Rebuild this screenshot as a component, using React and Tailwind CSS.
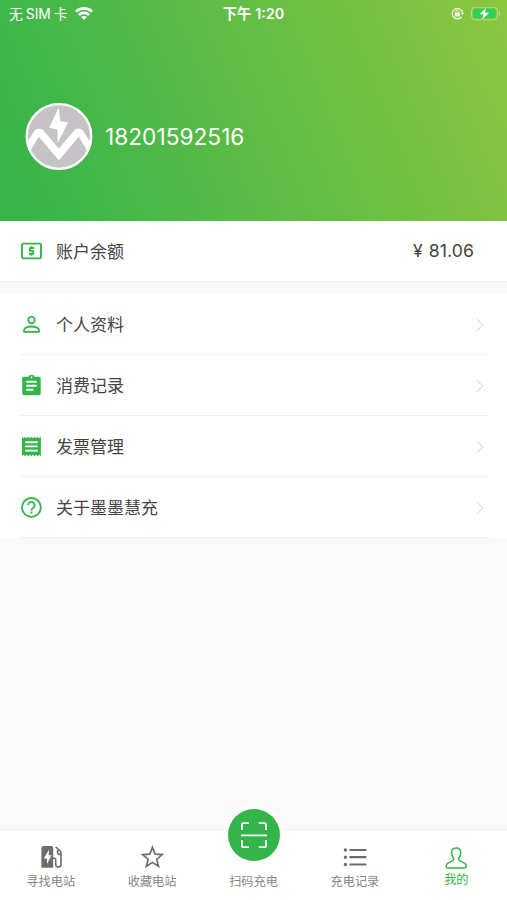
import React from 'react';

const GREEN = '#33b54a';

function WifiIcon() {
  return (
    <svg className="h-[14px] w-[18px]" viewBox="0 0 18 14" fill="none" stroke="#fff" strokeWidth="2.7">
      <path d="M0.9 4.6C5.4 0.2 12.6 0.2 17.1 4.6" />
      <path d="M3.9 7.9C6.8 5.2 11.2 5.2 14.1 7.9" />
      <path d="M6.1 10.1C7.7 8.7 10.3 8.7 11.9 10.1L9 13.1Z" fill="#fff" stroke="none" />
    </svg>
  );
}

function LockIcon() {
  return (
    <svg className="h-[13px] w-[13px]" viewBox="0 0 13 13" fill="none" stroke="#effae6">
      <path d="M10.6 9.8A5.2 5.2 0 1 1 11.5 5.6" strokeWidth="1.3" />
      <path d="M9.8 5.8h3.2l-1.5 2.4z" fill="#effae6" stroke="none" />
      <rect x="3.8" y="5.6" width="5" height="3.9" rx="0.5" fill="#effae6" stroke="none" />
      <path d="M4.8 6V4.7a1.5 1.5 0 0 1 3 0V6" strokeWidth="1" />
    </svg>
  );
}

function BatteryIcon() {
  return (
    <svg className="h-[14px] w-[30px]" viewBox="0 0 30 14">
      <rect x="0.6" y="0.2" width="25.8" height="12.6" rx="3.8" fill="none" stroke="#b5dc86" strokeWidth="1" />
      <path d="M27.9 4.2c1.6.7 1.6 4 0 4.7z" fill="#b5dc86" />
      <rect x="2.2" y="1.7" width="22.6" height="9.6" rx="2.3" fill="#30d158" />
      <path d="M15 1L8.6 7.3h3.9L11.4 12.2L18.2 5.7h-4.2z" fill="#fff" />
    </svg>
  );
}

function Avatar() {
  return (
    <svg className="h-[68px] w-[68px]" viewBox="0 0 68 68">
      <defs>
        <clipPath id="avatar-disc">
          <circle cx="34" cy="33.5" r="33" />
        </clipPath>
      </defs>
      <circle cx="34" cy="33.5" r="32.3" fill="#c5c3c5" />
      <g clipPath="url(#avatar-disc)">
        <path
          d="M0 42.5L9.8 27.2Q10.8 25.7 12.5 25.7H15.3Q17 25.7 18 27L33.8 45.4L49.6 27Q50.6 25.7 52.3 25.7H55Q56.7 25.7 57.6 27.2L68 43L64 51L53.8 33.8L33.8 57.2L13.7 33.8L3.5 51Z"
          fill="#fff"
        />
        <path d="M33.6 4.8L24.2 24.8L32.5 26.4V40.6L43.2 19.2L35.4 18.2Z" fill="#fff" />
      </g>
      <circle cx="34" cy="33.5" r="32.3" fill="none" stroke="#fff" strokeWidth="2.3" />
    </svg>
  );
}

function MoneyIcon() {
  return (
    <svg className="h-[22px] w-[22px]" viewBox="0 0 22 22" fill="none" stroke={GREEN}>
      <rect x="2" y="3.6" width="19" height="14.8" rx="1.2" strokeWidth="1.9" />
      <path d="M14.2 8H10.2Q9.8 8 9.8 8.4V10.5Q9.8 10.9 10.2 10.9H12.8Q13.2 10.9 13.2 11.3V13.4Q13.2 13.8 12.8 13.8H8.8M11.5 6.2V8M11.5 13.8V15.7" strokeWidth="1.9" />
    </svg>
  );
}

function PersonIcon() {
  return (
    <svg className="h-[22px] w-[22px]" viewBox="0 0 22 22" fill="none" stroke={GREEN} strokeWidth="1.8">
      <circle cx="11.5" cy="6.1" r="3.3" />
      <path d="M4 17.8V16.2C4 13.7 8.3 12.5 11.5 12.5S19 13.7 19 16.2V17.8Z" strokeLinejoin="round" />
    </svg>
  );
}

function ClipboardIcon() {
  return (
    <svg className="h-[22px] w-[22px]" viewBox="0 0 22 22">
      <path
        d="M4 1.7H8.6a3 3 0 0 1 5.8 0H18.9a1.8 1.8 0 0 1 1.8 1.8V18.5a1.8 1.8 0 0 1-1.8 1.8H4A1.8 1.8 0 0 1 2.2 18.5V3.5A1.8 1.8 0 0 1 4 1.7Z"
        fill={GREEN}
      />
      <circle cx="11.5" cy="2.3" r="0.9" fill="#fff" />
      <path d="M6.2 6.8H16.7M6.2 10.8H16.7M6.2 14.8H13.4" stroke="#fff" strokeWidth="1.9" />
    </svg>
  );
}

function ReceiptIcon() {
  return (
    <svg className="h-[22px] w-[22px]" viewBox="0 0 22 22">
      <path
        d="M2 0.8L3.6 2.2L5.1 0.8L6.7 2.2L8.3 0.8L9.9 2.2L11.4 0.8L13 2.2L14.6 0.8L16.2 2.2L17.7 0.8L19.3 2.2L20.9 0.8V20.2L19.3 18.8L17.7 20.2L16.2 18.8L14.6 20.2L13 18.8L11.4 20.2L9.9 18.8L8.3 20.2L6.7 18.8L5.1 20.2L3.6 18.8L2 20.2Z"
        fill={GREEN}
      />
      <path d="M5.2 6.2H17.7M5.2 10.4H17.7M5.2 14.6H17.7" stroke="#fff" strokeWidth="1.9" />
    </svg>
  );
}

function HelpIcon() {
  return (
    <svg className="h-[22px] w-[22px]" viewBox="0 0 22 22" fill="none" stroke={GREEN} strokeWidth="1.8">
      <circle cx="11.4" cy="10.4" r="9.4" />
      <path d="M8.2 8.2a3.2 3.2 0 1 1 5.5 2.2C12.4 11.6 11.4 11.9 11.4 13.6" />
      <path d="M11.4 14.6V16.5" strokeWidth="2" />
    </svg>
  );
}

function ChargerIcon() {
  return (
    <svg className="h-[24px] w-[24px]" viewBox="0 0 24 24">
      <path d="M4.4 1H12.2a2 2 0 0 1 2 2V22.8H2.4V3a2 2 0 0 1 2-2Z" fill="#6d6d6d" />
      <path d="M10 4.8L4.8 13.6H8V19L12.6 10.3H9.7Z" fill="#fff" />
      <path
        d="M14 13.2H15.3Q16.7 13.2 16.7 14.7V19.6Q16.7 22 19.3 22T22 19.6V8.3Q22 6.8 20.8 5.7L16.6 2M18.6 5V7.2Q18.6 9.6 22 9.6"
        fill="none"
        stroke="#6d6d6d"
        strokeWidth="1.6"
      />
    </svg>
  );
}

function StarIcon() {
  return (
    <svg className="h-[24px] w-[24px]" viewBox="0 0 24 24" fill="none" stroke="#6d6d6d" strokeWidth="1.7">
      <path d="M12.4 2.4L15 9.1L22.2 9.6L16.7 14.2L18.5 21.3L12.4 17.4L6.3 21.3L8.1 14.2L2.6 9.6L9.8 9.1Z" />
    </svg>
  );
}

function ScanIcon() {
  return (
    <svg className="h-[28px] w-[28px]" viewBox="0 0 28 28" fill="none" stroke="#fff" strokeWidth="1.8">
      <path d="M1.9 9.1V4a1.8 1.8 0 0 1 1.8-1.8H9M18.8 2.2H24.2A1.8 1.8 0 0 1 26 4V9.1M1.9 19.1V24.4a1.8 1.8 0 0 0 1.8 1.8H9M18.8 26.2H24.2A1.8 1.8 0 0 0 26 24.4V19.1" />
      <path d="M0.9 14.4H27" />
    </svg>
  );
}

function ListIcon() {
  return (
    <svg className="h-[24px] w-[24px]" viewBox="0 0 24 24" fill="none" stroke="#6d6d6d">
      <path d="M6.4 5H23.4M6.4 12.2H23.4M6.4 19.5H23.4" strokeWidth="2.2" />
      <path d="M2.4 5h0M2.4 12.2h0M2.4 19.5h0" strokeWidth="3.4" strokeLinecap="round" />
    </svg>
  );
}

function UserIcon() {
  return (
    <svg className="h-[24px] w-[24px]" viewBox="0 0 24 24" fill="none" stroke={GREEN} strokeWidth="1.5">
      <path
        d="M12.2 2C9 2 7.6 4 7.6 6.8C7.6 9.3 8.5 11 9.7 12.4Q10.3 13.9 8.9 14.7L4 17.2Q2 18.4 2 20.2Q2 21.9 3.6 21.9H20.8Q22.4 21.9 22.4 20.2Q22.4 18.4 20.4 17.2L15.5 14.7Q14.1 13.9 14.7 12.4C15.9 11 16.8 9.3 16.8 6.8C16.8 4 15.4 2 12.2 2Z"
        strokeLinejoin="round"
      />
    </svg>
  );
}

function Chevron() {
  return (
    <svg className="h-[14px] w-[8px]" viewBox="0 0 8 14" fill="none" stroke="#dedede" strokeWidth="1.1">
      <path d="M0.8 1.2L6.8 7L0.8 12.8" />
    </svg>
  );
}

const MENU = [
  { label: '个人资料', Icon: PersonIcon },
  { label: '消费记录', Icon: ClipboardIcon },
  { label: '发票管理', Icon: ReceiptIcon },
  { label: '关于墨墨慧充', Icon: HelpIcon },
];

function Tab({ label, children }) {
  return (
    <div className="flex flex-1 flex-col items-center pt-[14px]">
      {children}
      <span className="mt-[3px] text-[12.2px] leading-[20px] text-[#858585]">{label}</span>
    </div>
  );
}

export default function App() {
  return (
    <div className="flex h-[900px] w-[507px] flex-col overflow-hidden bg-[#fafafa] font-['Inter','Noto_Sans_CJK_SC',sans-serif] text-[#444]">
      <header className="h-[221px] shrink-0 bg-[linear-gradient(68deg,#37b54a_0%,#39b54a_8%,#8cc63f_100%)] text-white">
        <div className="grid h-[27px] grid-cols-3 items-center">
          <div className="flex items-center gap-[7px] pl-[9px]">
            <span className="flex gap-[3px] text-[13.8px] leading-[20px] whitespace-nowrap">
              <span>无</span>
              <span>SIM</span>
              <span>卡</span>
            </span>
            <WifiIcon />
          </div>
          <div className="text-center text-[14.4px] leading-[20px] font-semibold">下午 1:20</div>
          <div className="flex items-center justify-end gap-[7px] pr-[6px]">
            <LockIcon />
            <BatteryIcon />
          </div>
        </div>
        <div className="mt-[76px] flex items-center pl-[25px]">
          <Avatar />
          <span className="ml-[12px] text-[22.7px] leading-[30px] whitespace-nowrap">18201592516</span>
        </div>
      </header>

      <section className="flex h-[61px] shrink-0 items-center border-b border-[#f0f0f0] bg-white pr-[33px] pl-[20px]">
        <MoneyIcon />
        <span className="ml-[14px] pt-px text-[17px] leading-[24px]">账户余额</span>
        <span className="ml-auto text-[17.6px] leading-[24px] tracking-[0.1px]">
          <span className="mr-px">¥</span> 81.06
        </span>
      </section>

      <section className="mt-[12px] shrink-0 bg-white pl-[20px]">
        {MENU.map(({ label, Icon }) => (
          <div key={label} className="mr-[18px] flex h-[61px] items-center border-b border-[#f0f0f0] pt-px pr-[5px]">
            <Icon />
            <span className="ml-[14px] pt-px text-[17px] leading-[24px]">{label}</span>
            <span className="ml-auto">
              <Chevron />
            </span>
          </div>
        ))}
      </section>

      <nav className="mt-auto flex h-[72px] shrink-0 border-t-[3px] border-[#f6f6f6] bg-white">
        <Tab label="寻找电站">
          <ChargerIcon />
        </Tab>
        <Tab label="收藏电站">
          <StarIcon />
        </Tab>
        <div className="flex flex-1 flex-col items-center">
          <div className="-mt-[27px] flex h-[62px] w-[62px] shrink-0 items-center justify-center rounded-full bg-[#fdfdfd]">
            <div className="flex h-[52px] w-[52px] items-center justify-center rounded-full bg-[#33b54a]">
              <ScanIcon />
            </div>
          </div>
          <span className="mt-[6px] text-[12.2px] leading-[20px] text-[#858585]">扫码充电</span>
        </div>
        <Tab label="充电记录">
          <ListIcon />
        </Tab>
        <div className="flex flex-1 flex-col items-center pt-[15px]">
          <UserIcon />
          <span className="text-[12.2px] leading-[20px] text-[#33b54a]">我的</span>
        </div>
      </nav>
    </div>
  );
}
